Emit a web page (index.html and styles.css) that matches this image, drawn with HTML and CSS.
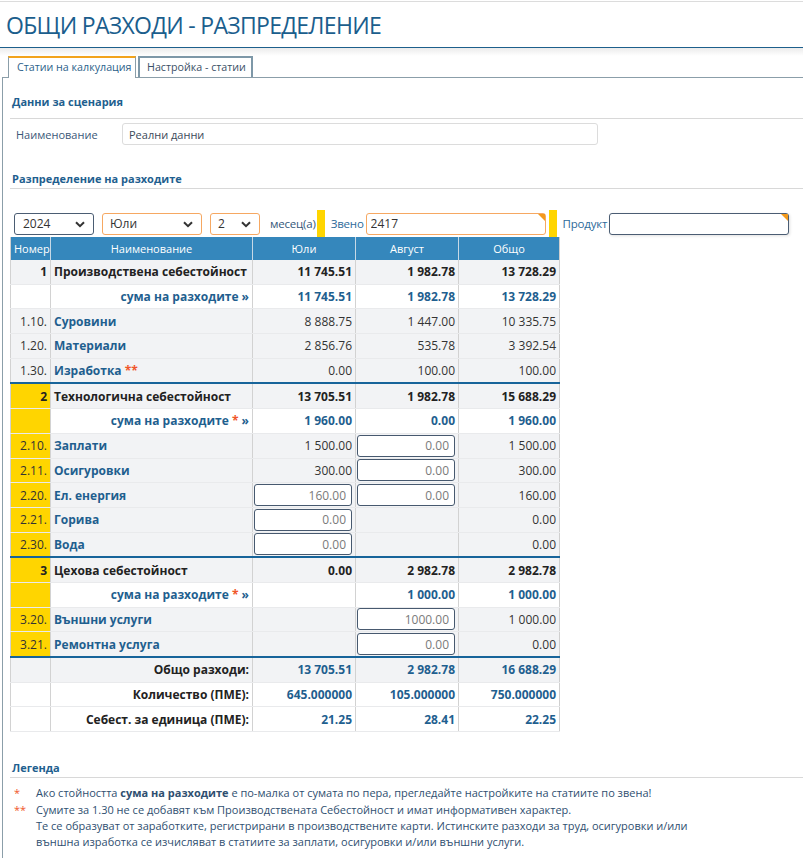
FILE: index.html
```html
<!DOCTYPE html>
<html lang="bg">
<head>
<meta charset="utf-8">
<title>Общи разходи - разпределение</title>
<link rel="stylesheet" href="styles.css">
</head>
<body>
<header class="page-header">
  <h1 class="page-title">ОБЩИ РАЗХОДИ - РАЗПРЕДЕЛЕНИЕ</h1>
</header>
<div class="header-shadow"></div>
<div class="tabs">
  <div class="tab tab-active">Статии на калкулация</div>
  <div class="tab tab-idle">Настройка - статии</div>
</div>
<main class="panel">
  <h2 class="section-title">Данни за сценария</h2>
  <div class="form-row">
    <label class="form-label">Наименование</label>
    <input class="form-input" type="text" value="Реални данни">
  </div>

  <h2 class="section-title section-gap">Разпределение на разходите</h2>
  <div class="controls">
    <div class="select-wrap sel-year">
      <select class="select sel-dark"><option>2024</option></select>
      <svg class="chev" width="10" height="7" viewBox="0 0 10 7"><path d="M1 1.2 L5 5.2 L9 1.2" fill="none" stroke="#333" stroke-width="2"/></svg>
    </div>
    <div class="select-wrap sel-month">
      <select class="select sel-orange"><option>Юли</option></select>
      <svg class="chev" width="10" height="7" viewBox="0 0 10 7"><path d="M1 1.2 L5 5.2 L9 1.2" fill="none" stroke="#333" stroke-width="2"/></svg>
    </div>
    <div class="select-wrap sel-count">
      <select class="select sel-orange"><option>2</option></select>
      <svg class="chev" width="10" height="7" viewBox="0 0 10 7"><path d="M1 1.2 L5 5.2 L9 1.2" fill="none" stroke="#333" stroke-width="2"/></svg>
    </div>
    <span class="ctl-label ctl-months">месец(а)</span>
    <span class="ybar"></span>
    <span class="ctl-label ctl-unit">Звено</span>
    <span class="lookup lookup-orange"><input class="lookup-input" type="text" value="2417"><span class="corner"></span></span>
    <span class="ybar"></span>
    <span class="ctl-label ctl-product">Продукт</span>
    <span class="lookup lookup-dark"><input class="lookup-input" type="text" value=""><span class="corner"></span></span>
  </div>

  <table class="grid">
    <colgroup>
      <col class="c-num"><col class="c-name"><col class="c-val"><col class="c-val"><col class="c-tot">
    </colgroup>
    <thead>
      <tr><th>Номер</th><th>Наименование</th><th>Юли</th><th>Август</th><th>Общо</th></tr>
    </thead>
    <tbody>
      <tr class="grp"><td class="num">1</td><td class="name">Производствена себестойност</td><td class="v">11 745.51</td><td class="v">1 982.78</td><td class="v">13 728.29</td></tr>
      <tr class="sum"><td class="num"></td><td class="sum-label">сума на разходите »</td><td class="v">11 745.51</td><td class="v">1 982.78</td><td class="v">13 728.29</td></tr>
      <tr class="item"><td class="num">1.10.</td><td class="name">Суровини</td><td class="v">8 888.75</td><td class="v">1 447.00</td><td class="v">10 335.75</td></tr>
      <tr class="item"><td class="num">1.20.</td><td class="name">Материали</td><td class="v">2 856.76</td><td class="v">535.78</td><td class="v">3 392.54</td></tr>
      <tr class="item"><td class="num">1.30.</td><td class="name">Изработка <span class="star">**</span></td><td class="v">0.00</td><td class="v">100.00</td><td class="v">100.00</td></tr>

      <tr class="grp sep"><td class="num y">2</td><td class="name">Технологична себестойност</td><td class="v">13 705.51</td><td class="v">1 982.78</td><td class="v">15 688.29</td></tr>
      <tr class="sum"><td class="num y"></td><td class="sum-label">сума на разходите <span class="star">*</span> »</td><td class="v">1 960.00</td><td class="v">0.00</td><td class="v">1 960.00</td></tr>
      <tr class="item"><td class="num y">2.10.</td><td class="name">Заплати</td><td class="v">1 500.00</td><td class="in"><input class="cell-input" value="0.00"></td><td class="v">1 500.00</td></tr>
      <tr class="item"><td class="num y">2.11.</td><td class="name">Осигуровки</td><td class="v">300.00</td><td class="in"><input class="cell-input" value="0.00"></td><td class="v">300.00</td></tr>
      <tr class="item"><td class="num y">2.20.</td><td class="name">Ел. енергия</td><td class="in"><input class="cell-input" value="160.00"></td><td class="in"><input class="cell-input" value="0.00"></td><td class="v">160.00</td></tr>
      <tr class="item"><td class="num y">2.21.</td><td class="name">Горива</td><td class="in"><input class="cell-input" value="0.00"></td><td class="v"></td><td class="v">0.00</td></tr>
      <tr class="item"><td class="num y">2.30.</td><td class="name">Вода</td><td class="in"><input class="cell-input" value="0.00"></td><td class="v"></td><td class="v">0.00</td></tr>

      <tr class="grp sep"><td class="num y">3</td><td class="name">Цехова себестойност</td><td class="v">0.00</td><td class="v">2 982.78</td><td class="v">2 982.78</td></tr>
      <tr class="sum"><td class="num y"></td><td class="sum-label">сума на разходите <span class="star">*</span> »</td><td class="v"></td><td class="v">1 000.00</td><td class="v">1 000.00</td></tr>
      <tr class="item"><td class="num y">3.20.</td><td class="name">Външни услуги</td><td class="v"></td><td class="in"><input class="cell-input" value="1000.00"></td><td class="v">1 000.00</td></tr>
      <tr class="item"><td class="num y">3.21.</td><td class="name">Ремонтна услуга</td><td class="v"></td><td class="in"><input class="cell-input" value="0.00"></td><td class="v">0.00</td></tr>

      <tr class="tot sep"><td class="num"></td><td class="tot-label">Общо разходи:</td><td class="v">13 705.51</td><td class="v">2 982.78</td><td class="v">16 688.29</td></tr>
      <tr class="tot white"><td class="num"></td><td class="tot-label">Количество (ПМЕ):</td><td class="v">645.000000</td><td class="v">105.000000</td><td class="v">750.000000</td></tr>
      <tr class="tot white"><td class="num"></td><td class="tot-label">Себест. за единица (ПМЕ):</td><td class="v">21.25</td><td class="v">28.41</td><td class="v">22.25</td></tr>
    </tbody>
  </table>

  <h2 class="section-title legend-gap">Легенда</h2>
  <ul class="legend">
    <li><span class="lg-mark">*</span><span class="lg-text">Ако стойността <b>сума на разходите</b> е по-малка от сумата по пера, прегледайте настройките на статиите по звена!</span></li>
    <li><span class="lg-mark">**</span><span class="lg-text">Сумите за 1.30 не се добавят към Производствената Себестойност и имат информативен характер.<br>Те се образуват от заработките, регистрирани в производствените карти. Истинските разходи за труд, осигуровки и/или<br>външна изработка се изчисляват в статиите за заплати, осигуровки и/или външни услуги.</span></li>
  </ul>
</main>
</body>
</html>
```

FILE: styles.css
```css
html, body {
  margin: 0;
  padding: 0;
  background: #fff;
}
body {
  font-family: "Open Sans", "Liberation Sans", sans-serif;
  font-size: 12px;
  color: #333;
  height: 858px;
  overflow: hidden;
}
.page-header {
  margin-top: 1px;
  border-top: 1px solid #dcdcdc;
  border-bottom: 1px solid #1d5f8c;
  height: 45px;
}
.page-title {
  margin: 0;
  padding-left: 6px;
  font-size: 23px;
  font-weight: 400;
  line-height: 46px;
  color: #1b5e8d;
  letter-spacing: -0.7px;
}
.header-shadow {
  height: 8px;
  background: linear-gradient(#ebebeb, #fff);
}
.tabs {
  display: flex;
  align-items: flex-start;
  gap: 2px;
  padding-left: 8px;
  height: 21px;
  position: relative;
  z-index: 1;
}
.tab {
  box-sizing: border-box;
  white-space: nowrap;
  font-size: 10.7px;
  color: #3a4f66;
  background: #fff;
}
.tab-active {
  height: 22px;
  width: 128px;
  border: 1px solid #8b9ea9;
  border-top: 2px solid #f2a31c;
  border-bottom: none;
  color: #2c5f8a;
  line-height: 19px;
  padding-left: 8px;
}
.tab-idle {
  height: 21px;
  width: 115px;
  border: 2px solid #7e98a8;
  border-bottom: none;
  line-height: 18px;
  padding-left: 7px;
}
.panel {
  margin-left: 2px;
  border-top: 1px solid #8b9ea9;
  border-left: 1px solid #8b9ea9;
  padding-top: 16px;
  min-height: 800px;
}
.section-title {
  margin: 0 0 0 7px;
  padding: 0 0 8px 2px;
  font-size: 11px;
  font-weight: 700;
  line-height: 16px;
  color: #1f5f8f;
  border-bottom: 1px solid #d8d8d8;
}
.section-gap { margin-top: 26px; padding-bottom: 1px; }
.legend-gap { margin-top: 28px; padding-bottom: 1px; }
.form-row {
  display: flex;
  align-items: center;
  margin-top: 4px;
  height: 22px;
}
.form-label {
  width: 106px;
  padding-left: 13px;
  font-size: 11px;
  color: #3b5878;
}
.form-input {
  box-sizing: border-box;
  width: 476px;
  height: 22px;
  border: 1px solid #dcdcdc;
  border-radius: 3px;
  padding: 0 6px;
  font-family: inherit;
  font-size: 11px;
  color: #3b4a5a;
}
.controls {
  display: flex;
  align-items: center;
  height: 27px;
  margin-top: 21px;
  padding-left: 11px;
}
.select-wrap {
  position: relative;
  height: 22px;
}
.select {
  appearance: none;
  -webkit-appearance: none;
  box-sizing: border-box;
  height: 22px;
  border-radius: 3px;
  background: #fff;
  font-family: inherit;
  font-size: 12px;
  color: #333;
  padding: 0 0 0 8px;
  width: 100%;
}
.sel-dark { border: 1px solid #4b5d73; }
.sel-orange { border: 1px solid #f6a862; }
.sel-year { width: 80px; }
.sel-month { width: 100px; margin-left: 8px; }
.sel-count { width: 50px; margin-left: 8px; }
.sel-month .select, .sel-count .select { padding-left: 7px; }
.sel-year .select { padding-left: 8px; }
.chev {
  position: absolute;
  right: 9px;
  top: 8px;
  pointer-events: none;
}
.ctl-label {
  color: #2d6a9a;
  font-size: 11.5px;
  letter-spacing: -0.2px;
}
.ctl-months { margin-left: 10px; color: #34577a; }
.ybar {
  width: 8px;
  height: 27px;
  background: #ffd500;
  margin-left: 1px;
}
.ctl-unit { margin-left: 6px; }
.ctl-product { margin-left: 6px; }
.lookup {
  position: relative;
  margin-left: 2px;
  height: 22px;
}
.lookup-input {
  box-sizing: border-box;
  display: block;
  width: 180px;
  height: 22px;
  border-radius: 3px;
  font-family: inherit;
  font-size: 12px;
  color: #333;
  padding: 0 4px;
  background: #fff;
}
.lookup-orange .lookup-input { border: 1px solid #f6a862; }
.lookup-orange { margin-right: 2px; }
.lookup-dark .lookup-input { border: 1px solid #4b5d73; box-shadow: 1px 1px 3px rgba(0,0,0,0.12); }
.corner {
  position: absolute;
  right: 1px;
  top: 1px;
  width: 0;
  height: 0;
  border-left: 7px solid transparent;
  border-top: 7px solid #f39a1c;
}
.grid {
  margin-left: 7px;
  border-collapse: collapse;
  width: 550px;
  table-layout: fixed;
  border-left: 1px solid #cfcfcf;
  border-right: 1px solid #cfcfcf;
  border-bottom: 1px solid #cfcfcf;
}
.c-num { width: 40px; }
.c-name { width: 202px; }
.c-val { width: 103px; }
.c-tot { width: 101px; }
.grid th {
  background: #3587bc;
  color: #fff;
  font-weight: 400;
  font-size: 11px;
  height: 23px;
  padding: 0;
  border-left: 1px solid #c7d9e6;
  text-align: center;
}
.grid th:first-child { border-left: none; text-align: left; padding-left: 3px; }
.grid td {
  height: 23.7px;
  padding: 0 3px;
  border-left: 1px solid #d2d2d2;
  border-bottom: 1px solid #e9eaec;
  background: #f2f3f5;
  white-space: nowrap;
}
.grid td.num { text-align: right; padding-right: 3px; }
.grid td.y { background: #ffd500; }
.grid td.name { color: #1f5f8f; font-weight: 700; padding-left: 3px; }
.grid td.v { text-align: right; }
.grid tr.grp td { font-weight: 700; color: #222; }
.grid tr.sum td { background: #fff; color: #1f5f8f; font-weight: 700; }
.grid tr.sum td.y { background: #ffd500; }
.grid td.sum-label { text-align: right; }
.grid tr.sep td { border-top: 2px solid #17649a; }
.grid tr.tot td { color: #1f5f8f; font-weight: 700; }
.grid tr.tot td.tot-label { color: #222; text-align: right; }
.grid tr.white td { background: #fff; }
.grid td.in { padding: 0 0 0 1px; }
.star { color: #f0562a; }
.cell-input {
  box-sizing: border-box;
  display: block;
  width: 98px;
  height: 22px;
  border: 1px solid #47596f;
  border-radius: 3px;
  background: #fff;
  text-align: right;
  padding: 0 5px;
  font-family: inherit;
  font-size: 12px;
  color: #7a7a7a;
}
.legend {
  list-style: none;
  margin: 7px 0 0 0;
  padding: 0 0 0 11px;
  font-size: 11px;
  color: #2f4f70;
  line-height: 16px;
}
.legend li {
  display: flex;
  margin-bottom: 1px;
}
.lg-mark {
  width: 22px;
  color: #f0562a;
  flex: none;
}
.lg-text b { font-weight: 700; }
```
